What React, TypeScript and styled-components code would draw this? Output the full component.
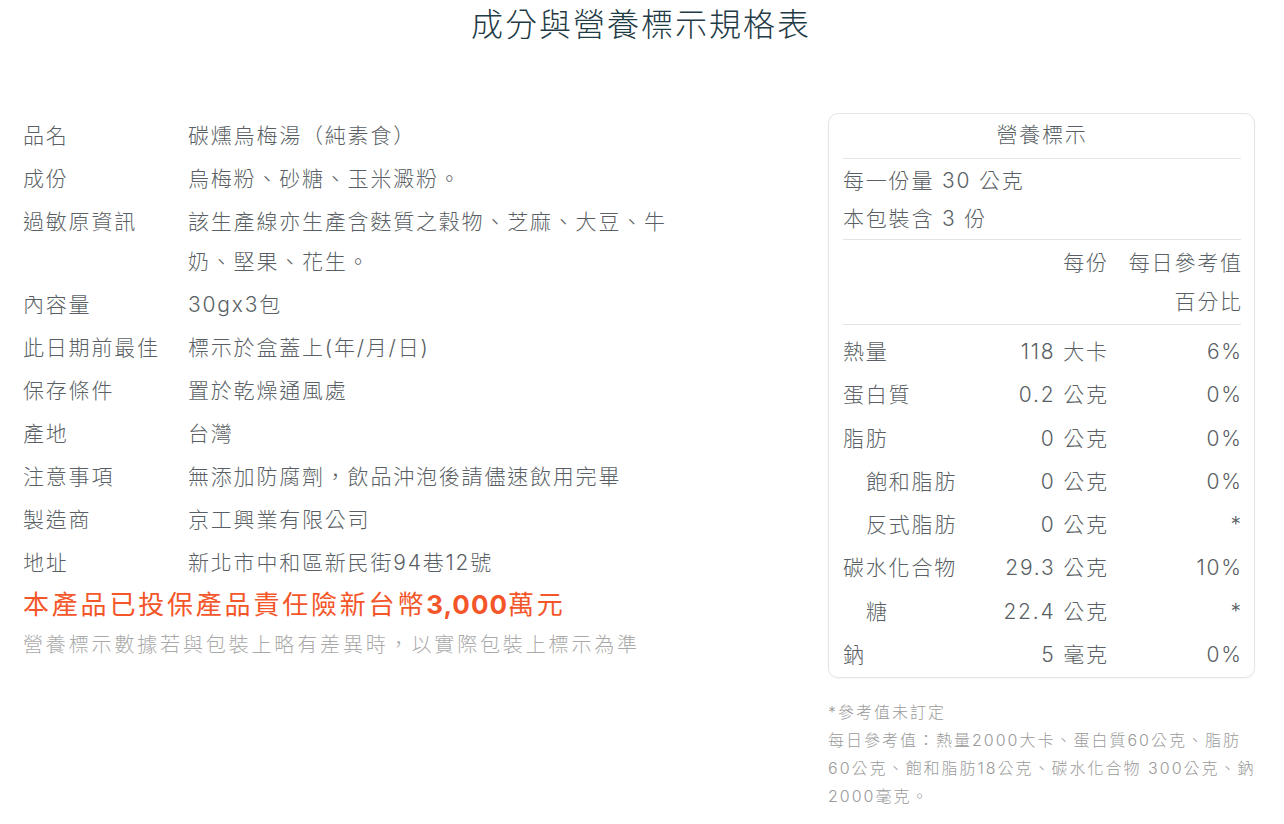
import React from "react";
import styled, { createGlobalStyle } from "styled-components";

const Global = createGlobalStyle`
  html, body { margin: 0; padding: 0; background: #fff; }
  body {
    font-family: Inter, "Noto Sans CJK TC", "Noto Sans", sans-serif;
    font-variant-numeric: proportional-nums;
    font-weight: 300;
    color: #5a5f65;
  }
`;

const Page = styled.div`
  width: 1284px;
  box-sizing: border-box;
  padding: 0 29px 0 23px;
`;

const Title = styled.h1`
  margin: 0;
  padding: 4px 0 0 4px;
  height: 112px;
  box-sizing: border-box;
  text-align: center;
  font-size: 32px;
  line-height: 42px;
  font-weight: 300;
  letter-spacing: 2px;
  color: #1f3b46;
`;

const Columns = styled.div`
  display: flex;
  justify-content: space-between;
  align-items: flex-start;
`;

const LeftCol = styled.div`
  width: 690px;
  padding-top: 4px;
`;

const InfoRow = styled.div`
  display: grid;
  grid-template-columns: 165px 515px;
  font-size: 21px;
  line-height: 40px;
  letter-spacing: 1.8px;
  margin-bottom: 3px;
`;

const Label = styled.div``;
const Value = styled.div``;

const Warn = styled.div`
  color: #f4562a;
  font-size: 26px;
  line-height: 40px;
  letter-spacing: 2.8px;
  margin-top: -1px;
  font-weight: 400;
  white-space: nowrap;
`;

const Bold = styled.span`
  font-weight: 700;
  letter-spacing: 1px;
`;

const Note = styled.div`
  color: #a9a9a9;
  font-size: 20px;
  line-height: 40px;
  letter-spacing: 2.85px;
  white-space: nowrap;
`;

const RightCol = styled.div`
  width: 427px;
  margin-top: 1px;
`;

const Panel = styled.div`
  border: 1px solid #e4e4e4;
  border-radius: 10px;
  padding: 1px 13px 1px 14px;
  box-shadow: 0 1px 2px rgba(0, 0, 0, 0.04);
  font-size: 21px;
  letter-spacing: 1.8px;
`;

const PanelHead = styled.div`
  text-align: center;
  line-height: 40px;
  padding-bottom: 3px;
  border-bottom: 1px solid #e4e4e4;
`;

const Serving = styled.div`
  padding: 3px 0 1px;
  line-height: 38px;
  border-bottom: 1px solid #e4e4e4;
`;

const Grid = styled.div<{ $pad?: string; $line?: boolean }>`
  display: grid;
  grid-template-columns: 1fr 130px 134px;
  line-height: ${(p) => (p.$line ? "39px" : "43.3px")};
  padding: ${(p) => p.$pad || "0"};
  ${(p) => (p.$line ? "border-bottom: 1px solid #e4e4e4;" : "")}
`;

const Cell = styled.div<{ $right?: boolean; $indent?: boolean }>`
  text-align: ${(p) => (p.$right ? "right" : "left")};
  padding-left: ${(p) => (p.$indent ? "23px" : "0")};
  white-space: nowrap;
  margin-right: ${(p) => (p.$right ? "-1.8px" : "0")};
`;

const HeadPct = styled.div`
  justify-self: end;
  width: 116px;
  text-align: right;
  margin-right: -1.8px;
`;

const Foot = styled.div`
  margin-top: 20px;
  margin-right: -4px;
  font-size: 16px;
  line-height: 28px;
  letter-spacing: 2px;
  color: #9a9a9a;
`;

const info: [string, string][] = [
  ["品名", "碳燻烏梅湯（純素食）"],
  ["成份", "烏梅粉、砂糖、玉米澱粉。"],
  ["過敏原資訊", "該生產線亦生產含麩質之穀物、芝麻、大豆、牛奶、堅果、花生。"],
  ["內容量", "30gx3包"],
  ["此日期前最佳", "標示於盒蓋上(年/月/日)"],
  ["保存條件", "置於乾燥通風處"],
  ["產地", "台灣"],
  ["注意事項", "無添加防腐劑，飲品沖泡後請儘速飲用完畢"],
  ["製造商", "京工興業有限公司"],
  ["地址", "新北市中和區新民街94巷12號"],
];

const nutrition: [string, string, string, boolean][] = [
  ["熱量", "118 大卡", "6%", false],
  ["蛋白質", "0.2 公克", "0%", false],
  ["脂肪", "0 公克", "0%", false],
  ["飽和脂肪", "0 公克", "0%", true],
  ["反式脂肪", "0 公克", "*", true],
  ["碳水化合物", "29.3 公克", "10%", false],
  ["糖", "22.4 公克", "*", true],
  ["鈉", "5 毫克", "0%", false],
];

export default function App() {
  return (
    <Page>
      <Global />
      <Title>成分與營養標示規格表</Title>
      <Columns>
        <LeftCol>
          {info.map(([k, v]) => (
            <InfoRow key={k}>
              <Label>{k}</Label>
              <Value>{v}</Value>
            </InfoRow>
          ))}
          <Warn>
            本產品已投保產品責任險新台幣<Bold>3,000</Bold>萬元
          </Warn>
          <Note>營養標示數據若與包裝上略有差異時，以實際包裝上標示為準</Note>
        </LeftCol>
        <RightCol>
          <Panel>
            <PanelHead>營養標示</PanelHead>
            <Serving>
              <div>每一份量 30 公克</div>
              <div>本包裝含 3 份</div>
            </Serving>
            <Grid $line $pad="3px 0 3px">
              <Cell />
              <Cell $right>每份</Cell>
              <HeadPct>每日參考值百分比</HeadPct>
            </Grid>
            <Grid $pad="5px 0 0">
              {nutrition.map(([n, a, p, ind]) => (
                <React.Fragment key={n}>
                  <Cell $indent={ind}>{n}</Cell>
                  <Cell $right>{a}</Cell>
                  <Cell $right>{p}</Cell>
                </React.Fragment>
              ))}
            </Grid>
          </Panel>
          <Foot>
            *參考值未訂定
            <br />
            每日參考值：熱量2000大卡、蛋白質60公克、脂肪60公克、飽和脂肪18公克、碳水化合物 300公克、鈉2000毫克。
          </Foot>
        </RightCol>
      </Columns>
    </Page>
  );
}
